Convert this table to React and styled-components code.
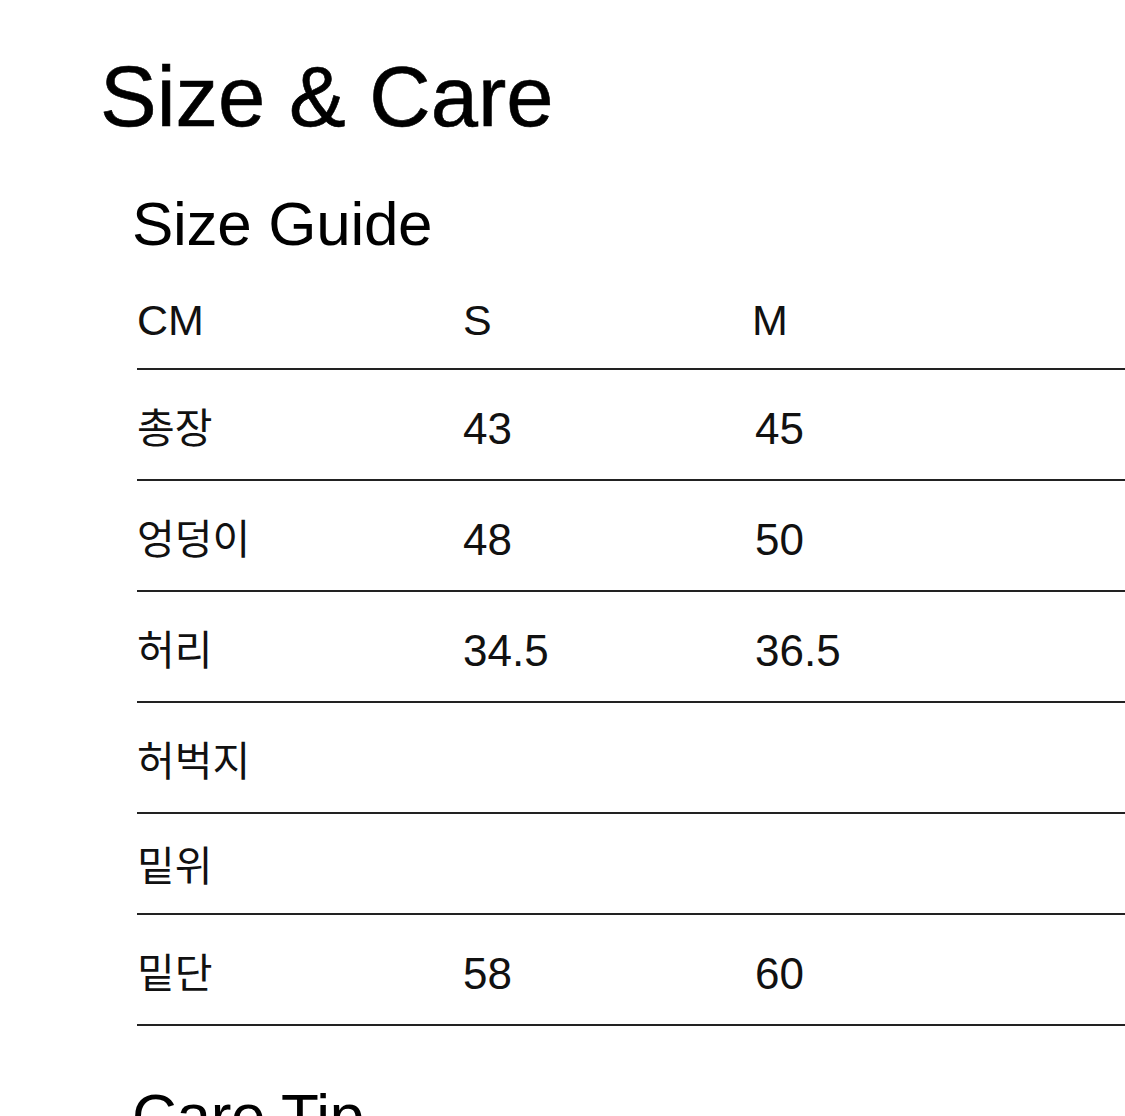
import styled, { createGlobalStyle } from "styled-components";

const GlobalStyle = createGlobalStyle`
  html, body {
    margin: 0;
    padding: 0;
    background: #ffffff;
    overflow: hidden;
  }
  body {
    font-family: "Liberation Sans", "Noto Sans CJK KR", sans-serif;
    color: #111111;
  }
`;

const sizeRows = [
  { label: "총장", s: "43", m: "45" },
  { label: "엉덩이", s: "48", m: "50" },
  { label: "허리", s: "34.5", m: "36.5" },
  { label: "허벅지", s: "", m: "" },
  { label: "밑위", s: "", m: "", compact: true },
  { label: "밑단", s: "58", m: "60" },
];

export default function App() {
  return (
    <>
      <GlobalStyle />
      <Page>
        <Title>Size &amp; Care</Title>
        <Section>
          <SectionTitle>Size Guide</SectionTitle>
          <SizeTable>
            <HeaderRow>
              <HeadCell>CM</HeadCell>
              <HeadCell>S</HeadCell>
              <HeadCell>M</HeadCell>
            </HeaderRow>
            {sizeRows.map((row) => (
              <Row key={row.label} $compact={row.compact}>
                <LabelCell>{row.label}</LabelCell>
                <ValueCell>{row.s}</ValueCell>
                <ValueCell $shift>{row.m}</ValueCell>
              </Row>
            ))}
          </SizeTable>
          <CareTitle>Care Tip</CareTitle>
        </Section>
      </Page>
    </>
  );
}

const Page = styled.div`
  padding: 54px 0 0 100px;
  height: 1116px;
  box-sizing: border-box;
  overflow: hidden;
`;

const Title = styled.h1`
  margin: 0;
  font-size: 85px;
  line-height: 1;
  font-weight: 400;
  color: #000;
  -webkit-text-stroke: 0.6px #000;
`;

const Section = styled.section`
  margin-top: 54px;
  padding-left: 32px;
`;

const SectionTitle = styled.h2`
  margin: 0;
  font-size: 62px;
  line-height: 1;
  font-weight: 400;
  color: #000;
  letter-spacing: -0.3px;
`;

const SizeTable = styled.div`
  display: flex;
  flex-direction: column;
  margin-left: 5px;
`;

const Row = styled.div`
  display: grid;
  grid-template-columns: 326px 289px 1fr;
  align-items: center;
  box-sizing: border-box;
  height: ${({ $compact }) => ($compact ? "101px" : "111px")};
  padding-top: ${({ $compact }) => ($compact ? "7px" : "9px")};
  border-bottom: 2px solid #222;
`;

const HeaderRow = styled(Row)`
  height: 115px;
  padding-top: 18px;
`;

const HeadCell = styled.div`
  font-size: 43px;
  line-height: 1;
  color: #111;
`;

const LabelCell = styled.div`
  font-size: 41px;
  line-height: 1;
`;

const ValueCell = styled.div`
  font-size: 44px;
  line-height: 1;
  padding-left: ${({ $shift }) => ($shift ? "3px" : "0")};
`;

const CareTitle = styled(SectionTitle)`
  margin-top: 59px;
`;
